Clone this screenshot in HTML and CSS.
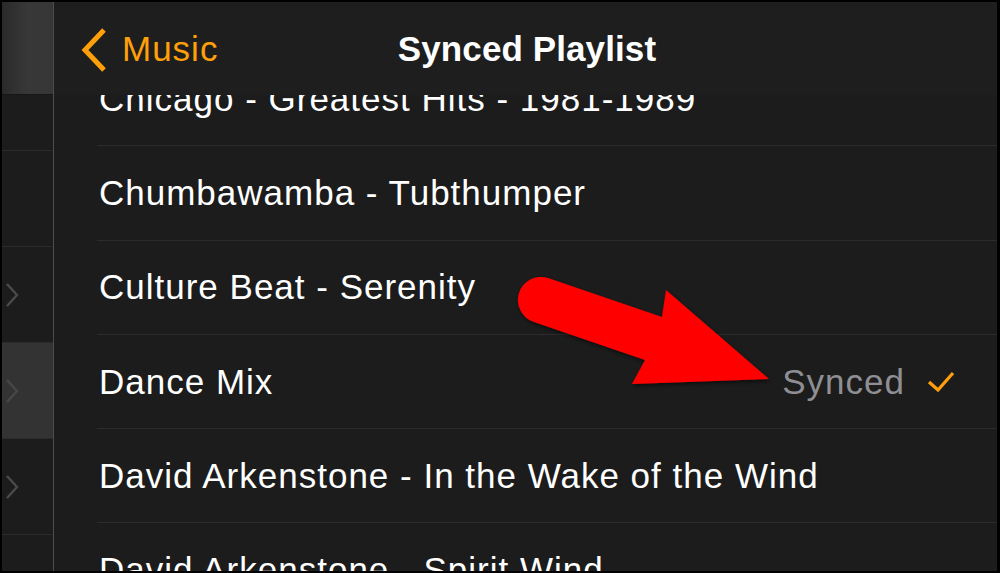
FILE: index.html
```html
<!DOCTYPE html>
<html>
<head>
<meta charset="utf-8">
<link rel="stylesheet" href="styles.css">
</head>
<body>
<div class="frame">
  <aside class="side">
    <div class="side-head"></div>
    <div class="side-row side-row-first"></div>
    <div class="side-row"></div>
    <div class="side-row"><svg class="side-chev-svg" viewBox="0 0 14 26"><path d="M2 2 L12 13 L2 24" /></svg></div>
    <div class="side-row side-row-hl"><svg class="side-chev-svg" viewBox="0 0 14 26"><path d="M2 2 L12 13 L2 24" /></svg></div>
    <div class="side-row"><svg class="side-chev-svg" viewBox="0 0 14 26"><path d="M2 2 L12 13 L2 24" /></svg></div>
    <div class="side-row"></div>
  </aside>
  <main class="main">
    <header class="nav">
      <div class="back">
        <svg class="back-chev" viewBox="0 0 28 46"><path d="M24 3 L5 23 L24 43" /></svg>
        <span class="back-label">Music</span>
      </div>
      <div class="title">Synced Playlist</div>
    </header>
    <ul class="list">
      <li class="row"><span class="name">Chicago - Greatest Hits - 1981-1989</span></li>
      <li class="row"><span class="name">Chumbawamba - Tubthumper</span></li>
      <li class="row"><span class="name">Culture Beat - Serenity</span></li>
      <li class="row"><span class="name">Dance Mix</span><span class="status">Synced<svg class="check" viewBox="0 0 28 22"><path d="M2 11 L11 19 L26 2" /></svg></span></li>
      <li class="row"><span class="name">David Arkenstone - In the Wake of the Wind</span></li>
      <li class="row"><span class="name">David Arkenstone - Spirit Wind</span></li>
    </ul>
  </main>
  <svg class="arrow" viewBox="0 0 1000 573" width="1000" height="573">
    <defs>
      <filter id="sh" x="-10%" y="-10%" width="120%" height="130%">
        <feDropShadow dx="1" dy="2" stdDeviation="2" flood-color="#000" flood-opacity="0.6"/>
      </filter>
    </defs>
    <path filter="url(#sh)" fill="#ff0000" d="M548 278 L662 317 L666 290 L769 379 L632 384 L645 360 L534 322 A23 23 0 1 1 548 278 Z"/>
  </svg>
</div>
</body>
</html>
```

FILE: styles.css
```css
* { box-sizing: border-box; }
html, body { margin: 0; padding: 0; background: #000; }
body { width: 1000px; height: 573px; overflow: hidden; font-family: "Liberation Sans", Arial, sans-serif; }
.frame {
  position: relative;
  width: 1000px;
  height: 573px;
  padding: 2px 3px 2px 2px;
  display: flex;
  background: #000;
}
.side {
  width: 52px;
  flex: none;
  background: #1c1c1c;
  border-right: 1px solid #4c4c4c;
  overflow: hidden;
  display: flex;
  flex-direction: column;
}
.side-head {
  height: 93px;
  flex: none;
  background: linear-gradient(90deg, #2a2a2a 0%, #383838 50%, #363636 100%);
  border-bottom: 1px solid #161616;
}
.side-row {
  flex: none;
  height: 96px;
  border-bottom: 1px solid #2b2b2b;
  display: flex;
  align-items: center;
  position: relative;
}
.side-row-first { height: 56px; }
.side-row-hl { background: #333; }
.side-chev-svg {
  width: 14px;
  height: 26px;
  margin-left: 3px;
  fill: none;
  stroke: #4a4a4a;
  stroke-width: 2.4;
}
.side-row-hl .side-chev-svg { stroke: #474747; }
.main {
  flex: 1;
  position: relative;
  background: #1c1c1c;
  overflow: hidden;
}
.nav {
  position: absolute;
  top: 0;
  left: 0;
  right: 0;
  height: 93px;
  background: #1e1e1e;
  z-index: 2;
  display: flex;
  align-items: center;
  justify-content: center;
}
.back {
  position: absolute;
  left: 26px;
  top: 0;
  height: 93px;
  display: flex;
  align-items: center;
}
.back-chev {
  width: 28px;
  height: 46px;
  fill: none;
  stroke: #ff9f0a;
  stroke-width: 5;
  stroke-linecap: butt;
  stroke-linejoin: miter;
  margin-top: 2px;
}
.back-label {
  color: #ff9f0a;
  font-size: 35px;
  letter-spacing: 1px;
  margin-left: 14px;
}
.title {
  color: #fff;
  font-weight: bold;
  font-size: 35px;
  letter-spacing: 0.1px;
  margin-left: 3px;
}
.list {
  list-style: none;
  margin: 50px 0 0 0;
  padding: 0;
}
.row {
  height: 94.3px;
  margin-left: 43px;
  padding-left: 2px;
  border-bottom: 1px solid #2c2c2c;
  display: flex;
  align-items: center;
  justify-content: space-between;
  padding-right: 42px;
  color: #fff;
  font-size: 35px;
  letter-spacing: 1px;
}
.name { white-space: nowrap; }
.status {
  color: #8e8e93;
  display: flex;
  align-items: center;
}
.check {
  width: 28px;
  height: 22px;
  margin-left: 22px;
  fill: none;
  stroke: #ff9f0a;
  stroke-width: 3.2;
}
.arrow {
  position: absolute;
  left: 0;
  top: 0;
  pointer-events: none;
  z-index: 5;
}
```
